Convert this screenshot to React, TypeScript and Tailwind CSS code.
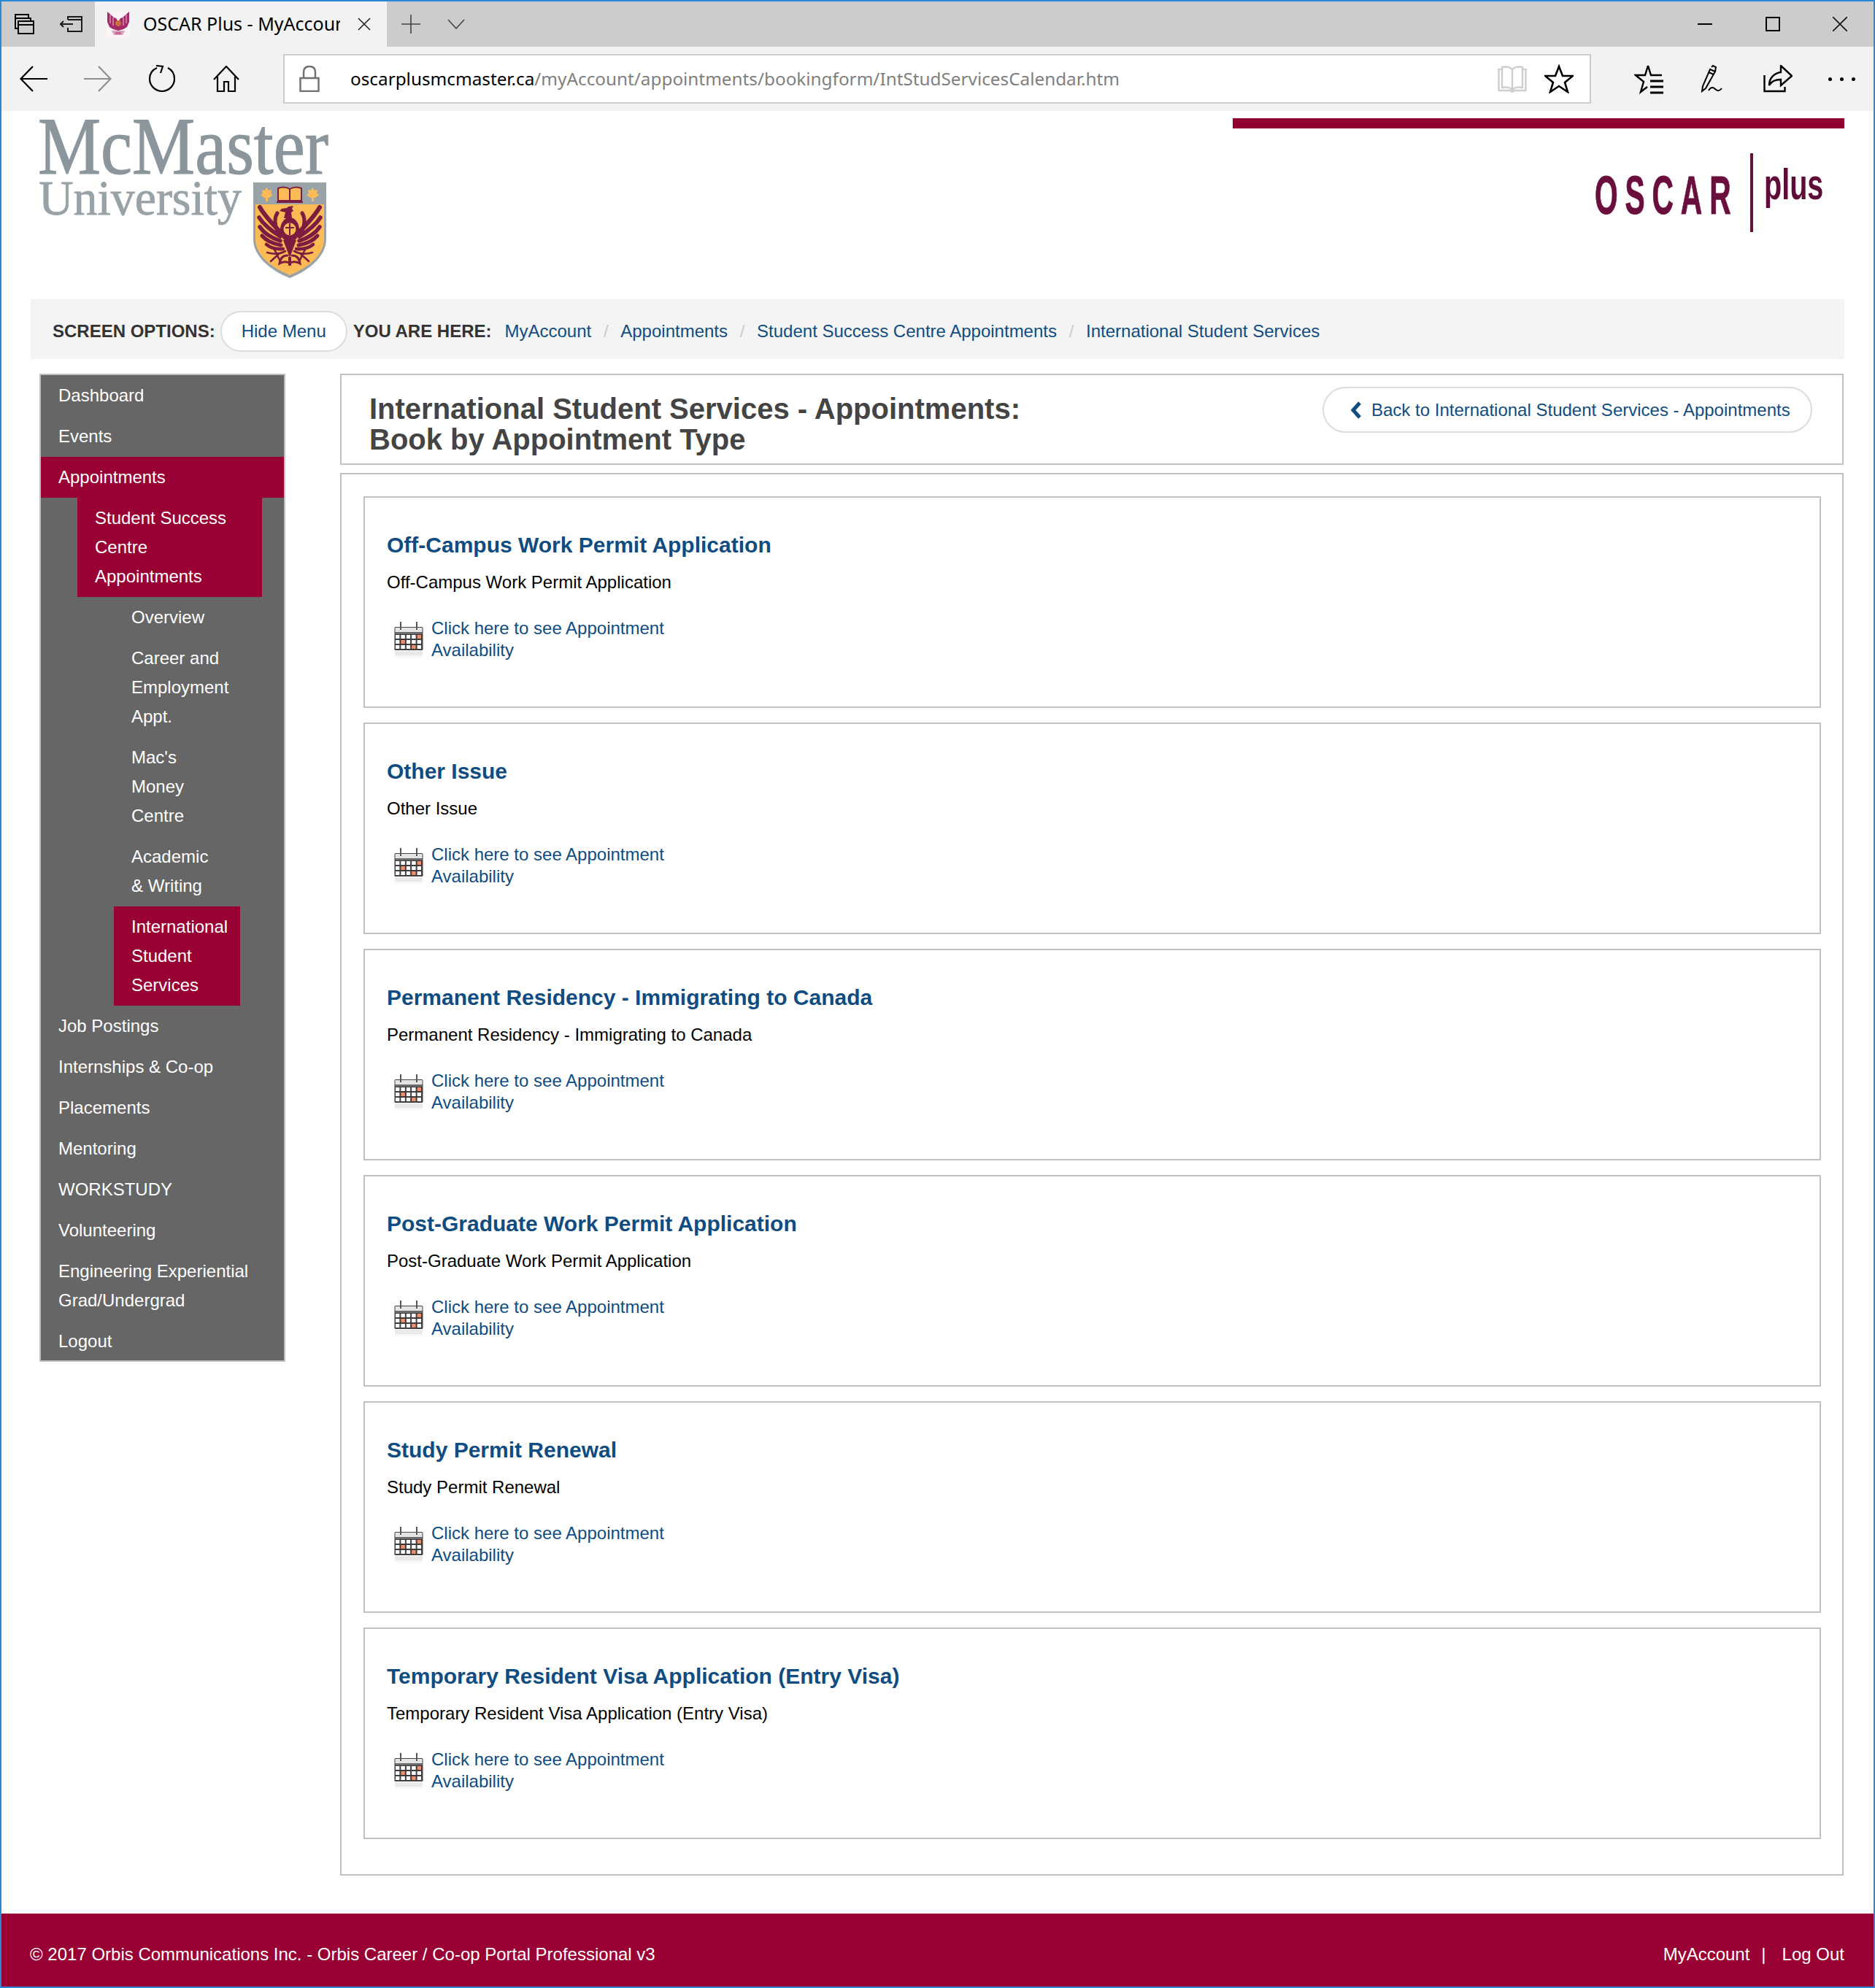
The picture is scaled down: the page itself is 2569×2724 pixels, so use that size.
import React from 'react';

const linkCls = 'text-[#0f4c81]';

const TabsAsideIcon = () => (
  <svg width="30" height="30" viewBox="0 0 30 30" fill="none" stroke="#000" strokeWidth="2">
    <path d="M2 2h18v5H2zM2 7v14h4M5 7h18v4M6 11h21v17H6zM6 16h21" />
  </svg>
);

const SetAsideIcon = () => (
  <svg width="32" height="22" viewBox="0 0 32 22" fill="none" stroke="#1a1a1a" strokeWidth="2">
    <path d="M11 5V1h19v20H11v-5M11 5h19M1 11h17M5 7l-4 4 4 4" />
  </svg>
);

const Favicon = () => (
  <svg width="32" height="36" viewBox="0 0 32 36">
    <rect width="32" height="36" fill="#fbf3f6" />
    <path d="M1 1l9 8 3 1 3 5 3-5 3-1 9-8v14l-3 7-5 3-7 2-7-2-5-3-3-7z" fill="#a32a66" />
    <path d="M5 5v12M9 9v11M27 5v12M23 9v11" stroke="#d78fb0" strokeWidth="1.500" />
    <circle cx="16" cy="17" r="4" fill="#c8703c" />
    <path d="M7 27h18l-3 6H10z" fill="#dba2bc" />
    <path d="M12 29h8v3h-8z" fill="#c46a94" />
  </svg>
);

const BackArrow = ({ color }: { color: string }) => (
  <svg width="38" height="36" viewBox="0 0 38 36" fill="none" stroke={color} strokeWidth="2.200">
    <path d="M38 18H2M18 1L1.500 18 18 35" />
  </svg>
);

const ForwardArrow = ({ color }: { color: string }) => (
  <svg width="38" height="36" viewBox="0 0 38 36" fill="none" stroke={color} strokeWidth="2.200">
    <path d="M0 18h36M20 1l16.500 17L20 35" />
  </svg>
);

const RefreshIcon = () => (
  <svg width="38" height="38" viewBox="0 0 38 38" fill="none" stroke="#000" strokeWidth="2.200">
    <path d="M12 4C5 7 2 13 2 19c0 9 7.500 17 17 17s17-8 17-17c0-6-3-12-9-15" />
    <path d="M11 1l9 1-3 9" />
  </svg>
);

const HomeIcon = () => (
  <svg width="36" height="36" viewBox="0 0 36 36" fill="none" stroke="#000" strokeWidth="2.200">
    <path d="M1 19L18 1l17 18M6 15v20h9V22h6v13h9V15" />
  </svg>
);

const LockIcon = () => (
  <svg width="28" height="36" viewBox="0 0 28 36" fill="none" stroke="#6f6f6f" strokeWidth="2.400">
    <path d="M1.500 17h25v18h-25zM6 17V9c0-5 3-8 8-8s8 3 8 8v8" />
  </svg>
);

const ReadingIcon = () => (
  <svg width="40" height="38" viewBox="0 0 40 38" fill="none" stroke="#cfcfcf" strokeWidth="2.500">
    <path d="M20 6C16 2 11 2 6 3v28c5-1 10-1 14 3 4-4 9-4 14-3V3c-5-1-10-1-14 3zM20 6v28M6 6H1.500v29H17l3 2 3-2h15.500V6H34" />
  </svg>
);

const StarIcon = () => (
  <svg width="40" height="40" viewBox="0 0 40 40" fill="none" stroke="#000" strokeWidth="2.600">
    <path d="M20 3l5 13h14l-11 9 4 13-12-8-12 8 4-13L1 16h14z" />
  </svg>
);

const FavoritesIcon = () => (
  <svg width="42" height="42" viewBox="0 0 42 42" fill="none" stroke="#000" strokeWidth="2.400">
    <path d="M19 3l4 13h15M19 3l-4 13H2l11 9-4 14 9-7M13 25" />
    <path d="M22 24h18M22 32h18M22 40h18" strokeWidth="2.800" />
  </svg>
);

const PenIcon = () => (
  <svg width="36" height="38" viewBox="0 0 36 38" fill="none" stroke="#000" strokeWidth="2">
    <path d="M13 6l7 3L7 32l-5 4 1-7zM15 3l2-2 4 2-1 6M11 10l7 3" />
    <path d="M11 35c3-5 6-5 9-2s6 3 9-1" />
  </svg>
);

const ShareIcon = () => (
  <svg width="40" height="38" viewBox="0 0 40 38" fill="none" stroke="#000" strokeWidth="2.400">
    <path d="M1.500 14v22h28v-6" />
    <path d="M24 1l15 14-15 13v-8c-8 0-13 2-16 8 0-10 7-17 16-18z" />
  </svg>
);

const CalendarIcon = () => {
  const salmon = [[4, 0], [1, 1], [3, 2]];
  const cells = [];
  for (let r = 0; r < 3; r++) {
    for (let c = 0; c < 5; c++) {
      const hot = salmon.some(([x, y]) => x === c && y === r);
      cells.push(<rect key={`${r}-${c}`} x={1.500 + c * 7.400} y={18.500 + r * 7} width="6.400" height="6" fill={hot ? '#ee8d6f' : '#fff'} stroke="#333" strokeWidth="0.900" />);
    }
  }
  return (
    <svg width="40" height="50" viewBox="0 0 40 50">
      <rect x="0.500" y="8" width="39" height="32" rx="1.500" fill="#444" />
      <rect x="1.500" y="9" width="37" height="6" fill="#e4e4e4" />
      <rect x="1.500" y="15" width="37" height="3" fill="#6b6b6b" />
      <rect x="8" y="1" width="2" height="11" fill="#555" />
      <rect x="30" y="1" width="2" height="11" fill="#555" />
      {cells}
      <rect x="1" y="41" width="38" height="7" fill="#e9e9e9" />
      <rect x="1" y="47" width="38" height="3" fill="#f7f7f7" />
    </svg>
  );
};

const Wing = () => (
  <g fill="none" stroke="#7c1c41" strokeLinecap="round">
    <path d="M384 318C375 308 364 298 356 284" strokeWidth="6" />
    <path d="M384 324C373 317 362 309 355 298" strokeWidth="5.500" />
    <path d="M384 330C372 326 362 320 356 311" strokeWidth="5.500" />
    <path d="M385 336C374 334 365 330 359 323" strokeWidth="5" />
    <path d="M388 341C378 342 370 339 365 335" strokeWidth="4.500" />
    <path d="M380 316C376 306 376 298 380 292" strokeWidth="5" />
    <path d="M391 344C384 348 376 349 366 346M382 348L371 358M376 342L384 358" strokeWidth="2.600" />
    <path d="M394 350C388 350 384 354 383 361C388 358 392 358 396 360" strokeWidth="3" />
  </g>
);

const McMasterLogo = () => (
  <svg width="420" height="232" viewBox="40 155 420 232">
    <text x="52" y="238" fontFamily="'Liberation Serif', serif" fontSize="113" textLength="398" lengthAdjust="spacingAndGlyphs" fill="#8b969c" stroke="#8b969c" strokeWidth="1.200">McMaster</text>
    <text x="53" y="294" fontFamily="'Liberation Serif', serif" fontSize="68" textLength="278" lengthAdjust="spacingAndGlyphs" fill="#98a2a7" stroke="#98a2a7" strokeWidth="0.800">University</text>
    <path d="M347 250h100v78c0 22-22 42-50 53-28-11-50-31-50-53z" fill="#9aa3a7" />
    <path d="M350 280h94v48c0 20-20 38-47 49-27-11-47-29-47-49z" fill="#fdbb55" />
    <path d="M381 258c5-2 11-2 16 1 5-3 11-3 16-1v17h-32z" fill="#fdbb55" stroke="#7c1c41" strokeWidth="2" />
    <path d="M397 259v15M379 277h36" stroke="#7c1c41" strokeWidth="2" />
    <path d="M365 257l3 4 4-1-1 5 3 2-5 4h-2v5h-3v-5h-2l-5-4 3-2-1-5 4 1z" fill="#fdbb55" />
    <path d="M428 257l3 4 4-1-1 5 3 2-5 4h-2v5h-3v-5h-2l-5-4 3-2-1-5 4 1z" fill="#fdbb55" />
    <Wing />
    <g transform="translate(794 0) scale(-1 1)">
      <Wing />
    </g>
    <path d="M386 286l7-1 2-2 7-1-2 4 2 3-3 2 1 8h-11l2-8-4-1-4-1z" fill="#7c1c41" />
    <ellipse cx="397" cy="315" rx="13" ry="17" fill="#7c1c41" />
    <circle cx="397" cy="314" r="8.500" fill="#fdbb55" />
    <path d="M397 306v16M391 312h12" stroke="#7c1c41" strokeWidth="2" />
    <path d="M388 329l9 24 9-24z" fill="#7c1c41" />
    <path d="M397 352v12" stroke="#7c1c41" strokeWidth="4" />
  </svg>
);

const OscarLogo = () => (
  <svg width="340" height="130" viewBox="2170 200 340 130">
    <text transform="translate(2186 293) scale(0.55 1)" fontFamily="'Liberation Sans', sans-serif" fontWeight="700" fontSize="74" letterSpacing="18" fill="#6a0f3d" stroke="#6a0f3d" strokeWidth="1">OSCAR</text>
    <rect x="2399" y="210" width="4" height="108" fill="#6a0f3d" />
    <text transform="translate(2418 273) scale(0.66 1)" fontFamily="'Liberation Sans', sans-serif" fontWeight="700" fontSize="60" fill="#5e0c38">plus</text>
  </svg>
);

const menu = [
  { lines: ['Dashboard'], level: 0 },
  { lines: ['Events'], level: 0 },
  { lines: ['Appointments'], level: 0, active: true },
  { lines: ['Student Success', 'Centre', 'Appointments'], level: 1, active: true },
  { lines: ['Overview'], level: 2 },
  { lines: ['Career and', 'Employment', 'Appt.'], level: 2 },
  { lines: ["Mac's", 'Money', 'Centre'], level: 2 },
  { lines: ['Academic', '& Writing'], level: 2 },
  { lines: ['International', 'Student', 'Services'], level: 2, active: true },
  { lines: ['Job Postings'], level: 0 },
  { lines: ['Internships & Co-op'], level: 0 },
  { lines: ['Placements'], level: 0 },
  { lines: ['Mentoring'], level: 0 },
  { lines: ['WORKSTUDY'], level: 0 },
  { lines: ['Volunteering'], level: 0 },
  { lines: ['Engineering Experiential', 'Grad/Undergrad'], level: 0 },
  { lines: ['Logout'], level: 0 },
];

const levelCls: Record<number, string> = {
  0: 'pl-[24px]',
  1: 'ml-[50px] w-[253px] pl-[24px]',
  2: 'ml-[100px] w-[173px] pl-[24px]',
};

const cards = [
  'Off-Campus Work Permit Application',
  'Other Issue',
  'Permanent Residency - Immigrating to Canada',
  'Post-Graduate Work Permit Application',
  'Study Permit Renewal',
  'Temporary Resident Visa Application (Entry Visa)',
];

const crumbs = ['MyAccount', 'Appointments', 'Student Success Centre Appointments', 'International Student Services'];

const Browser = () => (
  <div className="font-['Noto_Sans',sans-serif]">
    <div className="flex h-[62px] bg-[#cccccc]">
      <div className="flex w-[64px] items-center justify-center"><TabsAsideIcon /></div>
      <div className="flex w-[64px] items-center justify-center"><SetAsideIcon /></div>
      <div className="flex w-[400px] items-center bg-[#f2f2f2] pl-[16px]">
        <Favicon />
        <span className="ml-[18px] mb-[2px] w-[270px] overflow-hidden whitespace-nowrap text-[25px] text-black">OSCAR Plus - MyAccount</span>
        <svg className="ml-[24px]" width="18" height="18" viewBox="0 0 18 18" stroke="#222" strokeWidth="1.600"><path d="M1 1l16 16M17 1L1 17" /></svg>
      </div>
      <div className="flex w-[66px] items-center justify-center">
        <svg width="26" height="26" viewBox="0 0 26 26" stroke="#444" strokeWidth="1.600"><path d="M13 0v26M0 13h26" /></svg>
      </div>
      <div className="flex w-[58px] items-center justify-center">
        <svg width="24" height="14" viewBox="0 0 24 14" fill="none" stroke="#444" strokeWidth="1.600"><path d="M1 1l11 12L23 1" /></svg>
      </div>
      <div className="ml-auto flex w-[92px] items-center justify-center">
        <div className="h-[2px] w-[20px] bg-black" />
      </div>
      <div className="flex w-[93px] items-center justify-center">
        <div className="h-[20px] w-[20px] border-2 border-black" />
      </div>
      <div className="flex w-[92px] items-center justify-center">
        <svg width="20" height="20" viewBox="0 0 20 20" stroke="#111" strokeWidth="1.600"><path d="M0 0l20 20M20 0L0 20" /></svg>
      </div>
    </div>
    <div className="flex h-[88px] items-center bg-[#f2f2f2]">
      <div className="flex w-[88px] justify-center"><BackArrow color="#000" /></div>
      <div className="flex w-[88px] justify-center"><ForwardArrow color="#8f8f8f" /></div>
      <div className="flex w-[88px] justify-center"><RefreshIcon /></div>
      <div className="flex w-[88px] justify-center"><HomeIcon /></div>
      <div className="ml-[34px] flex h-[68px] w-[1792px] items-center border-2 border-[#cccccc] bg-white pl-[20px]">
        <LockIcon />
        <div className="ml-[42px] flex-1 whitespace-nowrap text-[24.300px]">
          <span className="text-black">oscarplusmcmaster.ca</span>
          <span className="text-[#808080]">/myAccount/appointments/bookingform/IntStudServicesCalendar.htm</span>
        </div>
        <ReadingIcon />
        <div className="ml-[24px] mr-[22px]"><StarIcon /></div>
      </div>
      <div className="ml-[36px] flex w-[88px] justify-center"><FavoritesIcon /></div>
      <div className="flex w-[88px] justify-center"><PenIcon /></div>
      <div className="flex w-[88px] justify-center"><ShareIcon /></div>
      <div className="flex w-[87px] justify-center gap-[11px]">
        <div className="h-[5px] w-[5px] rounded-full bg-black" />
        <div className="h-[5px] w-[5px] rounded-full bg-black" />
        <div className="h-[5px] w-[5px] rounded-full bg-black" />
      </div>
    </div>
  </div>
);

const Sidebar = () => (
  <nav className="ml-[12px] h-fit w-[337px] border-2 border-[#c0c0c0] bg-[#666666] pb-0 text-white">
    {menu.map((item) => (
      <div
        key={item.lines.join(' ') + item.level}
        className={`pt-[8px] last:pb-[6px] not-last:pb-[8px] ${levelCls[item.level]} ${item.active ? 'bg-[#990033]' : ''}`}
      >
        {item.lines.map((line) => (
          <div key={line} className="whitespace-nowrap">{line}</div>
        ))}
      </div>
    ))}
  </nav>
);

const Card = ({ title }: { title: string }) => (
  <div className="h-[290px] border-2 border-[#c0c0c0] pl-[30px] pt-[45px]">
    <h2 className={`text-[30px] font-bold ${linkCls}`}>{title}</h2>
    <p className="mt-[11px] text-black">{title}</p>
    <div className="ml-[10px] mt-[28px] flex items-center">
      <CalendarIcon />
      <a className={`ml-[11px] w-[340px] leading-[30px] ${linkCls}`}>Click here to see Appointment Availability</a>
    </div>
  </div>
);

export default function App() {
  return (
    <div className="flex h-[2724px] w-[2569px] flex-col border-2 border-[#2b88d8] bg-white font-['Liberation_Sans',Arial,sans-serif] text-[24px] leading-[40px]">
      <Browser />
      <header className="flex h-[258px] justify-between pl-[38px] pr-[40px] pt-[3px]">
        <McMasterLogo />
        <div className="flex flex-col items-end pt-[7px]">
          <div className="h-[14px] w-[838px] bg-[#8f0030]" />
          <div className="mr-[18px] mt-[24px]"><OscarLogo /></div>
        </div>
      </header>
      <div className="mx-[40px] flex h-[82px] items-center bg-[#f4f4f4] pl-[30px] pt-[5px] text-[#333333]">
        <b className="whitespace-nowrap">SCREEN OPTIONS:</b>
        <a className={`ml-[7px] flex h-[56px] w-[174px] items-center justify-center rounded-full border-2 border-[#dddddd] bg-white ${linkCls}`}>Hide Menu</a>
        <b className="ml-[8px] whitespace-nowrap">YOU ARE HERE:</b>
        <div className="ml-[18px] flex gap-[16.700px]">
          {crumbs.map((c, i) => (
            <React.Fragment key={c}>
              {i > 0 && <span className="text-[#cccccc]">/</span>}
              <a className={`whitespace-nowrap ${linkCls}`}>{c}</a>
            </React.Fragment>
          ))}
        </div>
      </div>
      <div className="mx-[40px] mt-[20px] flex">
        <Sidebar />
        <main className="ml-[75px] w-[2060px]">
          <div className="flex h-[125px] items-start justify-between border-2 border-[#c0c0c0] pl-[38px] pr-[41px] pt-[16px]">
            <h1 className="mt-[9px] text-[40px] font-bold leading-[42px] text-[#444444]">
              International Student Services - Appointments:<br />Book by Appointment Type
            </h1>
            <a className={`flex h-[63px] w-[671px] items-center rounded-full border-2 border-[#dddddd] pl-[36px] ${linkCls}`}>
              <svg width="16" height="24" viewBox="0 0 16 24" fill="none" stroke="#0f4c81" strokeWidth="5"><path d="M13 2L4 12l9 10" /></svg>
              <span className="ml-[13px] whitespace-nowrap">Back to International Student Services - Appointments</span>
            </a>
          </div>
          <div className="mt-[11px] flex flex-col gap-[20px] border-2 border-[#c0c0c0] pb-[48px] pl-[30px] pr-[29px] pt-[30px]">
            {cards.map((c) => (
              <Card key={c} title={c} />
            ))}
          </div>
        </main>
      </div>
      <footer className="mt-auto flex h-[100px] items-center justify-between bg-[#990033] pl-[39px] pr-[40px] pt-[12px] text-white">
        <span>© 2017 Orbis Communications Inc. - Orbis Career / Co-op Portal Professional v3</span>
        <span className="flex gap-[16px]">
          <a>MyAccount</a>
          <span>|</span>
          <a className="ml-[6px]">Log Out</a>
        </span>
      </footer>
    </div>
  );
}
